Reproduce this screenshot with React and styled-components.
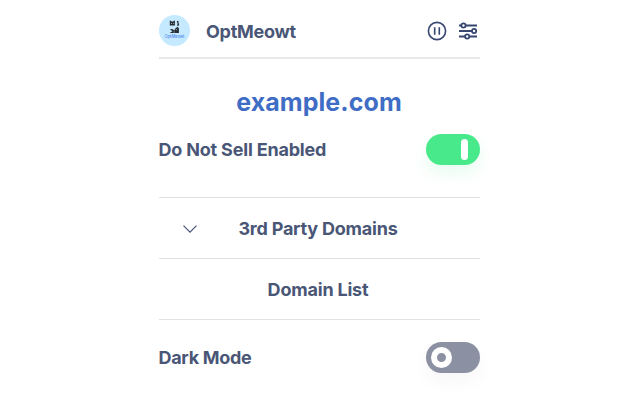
import React from "react";
import styled, { createGlobalStyle } from "styled-components";

const GlobalStyle = createGlobalStyle`
  * { box-sizing: border-box; }
  body { margin: 0; background: #fff; font-family: Inter, "Liberation Sans", sans-serif; }
`;

const Popup = styled.main`
  width: 321px;
  height: 400px;
  margin-left: 158.5px;
  color: #4a5676;
`;

const Header = styled.header`
  display: flex;
  align-items: center;
  height: 59px;
  padding-top: 4px;
  border-bottom: 2px solid #e8e8e8;
`;

const Label = styled.span`
  font-size: 18px;
  line-height: 24px;
  font-weight: 700;
  white-space: nowrap;
  letter-spacing: ${(p) => p.$tracking || 0}px;
`;

const Brand = styled(Label)`
  margin-left: 16.5px;
  margin-top: 2px;
`;

const HeaderIcons = styled.nav`
  display: flex;
  align-items: center;
  gap: 11px;
  margin: 0 1.5px 0 auto;
  color: #374671;
  svg { display: block; }
`;

const SiteSection = styled.section`
  height: 139px;
  border-bottom: 1px solid #e2e2e2;
`;

const SiteName = styled.h1`
  margin: 0;
  padding-top: 27px;
  text-align: center;
  font-size: 25px;
  line-height: 32px;
  font-weight: 700;
  letter-spacing: 0.08px;
  color: #3f6dc6;
`;

const SettingRow = styled.div`
  display: flex;
  align-items: center;
  justify-content: space-between;
  height: 31px;
  margin-top: ${(p) => p.$top}px;
`;

const Switch = styled.button`
  display: flex;
  align-items: center;
  justify-content: ${(p) => (p.$on ? "flex-end" : "flex-start")};
  width: 53.5px;
  height: 31px;
  padding: ${(p) => (p.$on ? "0 11.5px 0 0" : "0 0 0 5px")};
  border: 0;
  border-radius: 16px;
  background: ${(p) => (p.$on ? "#47e98a" : "#8b90a2")};
  box-shadow: 0 8px 16px ${(p) => (p.$on ? "rgba(71, 233, 138, 0.13)" : "rgba(90, 95, 115, 0.05)")};
`;

const Knob = styled.span`
  width: ${(p) => (p.$on ? 7 : 21)}px;
  height: 21px;
  border: ${(p) => (p.$on ? "0" : "6px solid #fff")};
  border-radius: 11px;
  background: ${(p) => (p.$on ? "#fff" : "transparent")};
`;

const ListRow = styled.div`
  display: grid;
  grid-template-columns: 62px 1fr 64px;
  align-items: center;
  justify-items: center;
  height: 61px;
  padding-top: 2px;
  border-bottom: 1px solid #e2e2e2;
  ${Label} { grid-column: 2; }
`;

const Logo = () => (
  <svg width="31" height="31" viewBox="0 0 31 31" aria-label="OptMeowt logo">
    <circle cx="15.5" cy="15.5" r="15.5" fill="#c5eaff" />
    <path d="M10.8 5.3l1.9 1.2h1.4l1.8-1.2v5.1h-5.1zM17.8 6h1.7v2.3l.8.8-.9 2h-1.3l.5-2zM10.8 14.2l2.5-.3 2 1.5 1-1.8 2.3-1.8 1.3 1.4v4.8h-9.4l3-1.8z" fill="#292e34" />
    <path d="M12 8.5h1M14.1 8.5h.8M16.8 14.2l1.1.7M14.5 17h1.2" stroke="#c5eaff" strokeWidth=".7" />
    <text x="15.5" y="22.5" textAnchor="middle" textLength="20" lengthAdjust="spacingAndGlyphs" fontFamily="Inter, sans-serif" fontSize="4.5" fontWeight="500" fill="#5387ed">OptMeowt</text>
  </svg>
);

const PauseIcon = () => (
  <svg width="20" height="20" viewBox="0 0 20 20" fill="none" stroke="currentColor" strokeWidth="1.6">
    <circle cx="10" cy="10" r="8.6" />
    <path d="M7.7 6.3v7.4M12.3 6.3v7.4" />
  </svg>
);

const SlidersIcon = () => (
  <svg width="20" height="20" viewBox="0 0 20 20" fill="none" stroke="currentColor" strokeWidth="1.8">
    <path d="M1 4.5h2.4M7.6 4.5H19M1 10h13M18.2 10H19M1 15.5h6.1M11.3 15.5H19" />
    <circle cx="5.5" cy="4.5" r="2.1" />
    <circle cx="16.1" cy="10" r="2.1" />
    <circle cx="9.2" cy="15.5" r="2.1" />
  </svg>
);

const ChevronIcon = () => (
  <svg width="16" height="10" viewBox="0 0 16 10" fill="none" stroke="#46527a" strokeWidth="1.2">
    <path d="M1.5 1.7L8 8.2l6.5-6.5" />
  </svg>
);

export default function App() {
  return (
    <>
      <GlobalStyle />
      <Popup>
        <Header>
          <Logo />
          <Brand $tracking={-0.27}>OptMeowt</Brand>
          <HeaderIcons>
            <PauseIcon />
            <SlidersIcon />
          </HeaderIcons>
        </Header>
        <SiteSection>
          <SiteName>example.com</SiteName>
          <SettingRow $top={16}>
            <Label $tracking={-0.19}>Do Not Sell Enabled</Label>
            <Switch $on aria-label="Do Not Sell"><Knob $on /></Switch>
          </SettingRow>
        </SiteSection>
        <ListRow>
          <ChevronIcon />
          <Label $tracking={-0.22}>3rd Party Domains</Label>
        </ListRow>
        <ListRow>
          <Label $tracking={-0.2}>Domain List</Label>
        </ListRow>
        <SettingRow $top={22.4}>
          <Label $tracking={-0.3}>Dark Mode</Label>
          <Switch aria-label="Dark Mode"><Knob /></Switch>
        </SettingRow>
      </Popup>
    </>
  );
}
